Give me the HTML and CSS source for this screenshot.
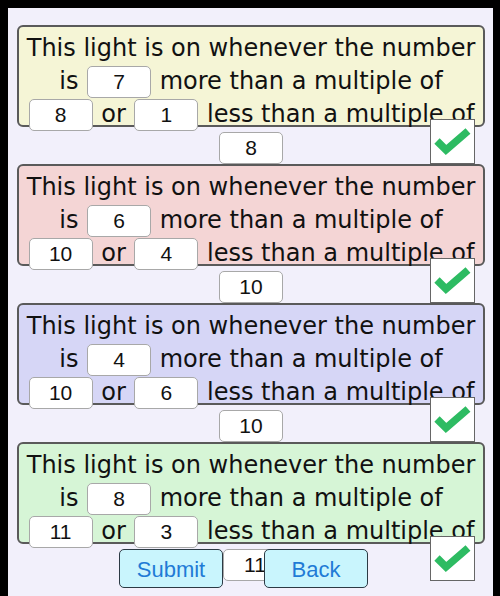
FILE: index.html
```html
<!DOCTYPE html>
<html lang="en">
<head>
  <meta charset="UTF-8" />
  <meta name="viewport" content="width=device-width, initial-scale=1" />
  <title>Lights</title>
  <link rel="stylesheet" href="styles.css">
</head>
<body>
  <div class="screen">

    <!-- Rule 1 -->
    <div class="rule">
      <div class="panel yellow">
        <div class="line">This light is on whenever the number</div>
        <div class="line">is <input class="num" type="text" value="7"> more than a multiple of</div>
        <div class="line"><input class="num" type="text" value="8"> or <input class="num" type="text" value="1"> less than a multiple of</div>
      </div>
      <div class="mod-row"><input class="num" type="text" value="8"></div>
      <div class="check"><svg width="43" height="43" viewBox="0 0 43 43"><polyline points="6,21 15,30 37,11" /></svg></div>
    </div>

    <!-- Rule 2 -->
    <div class="rule">
      <div class="panel pink">
        <div class="line">This light is on whenever the number</div>
        <div class="line">is <input class="num" type="text" value="6"> more than a multiple of</div>
        <div class="line"><input class="num" type="text" value="10"> or <input class="num" type="text" value="4"> less than a multiple of</div>
      </div>
      <div class="mod-row"><input class="num" type="text" value="10"></div>
      <div class="check"><svg width="43" height="43" viewBox="0 0 43 43"><polyline points="6,21 15,30 37,11" /></svg></div>
    </div>

    <!-- Rule 3 -->
    <div class="rule">
      <div class="panel blue">
        <div class="line">This light is on whenever the number</div>
        <div class="line">is <input class="num" type="text" value="4"> more than a multiple of</div>
        <div class="line"><input class="num" type="text" value="10"> or <input class="num" type="text" value="6"> less than a multiple of</div>
      </div>
      <div class="mod-row"><input class="num" type="text" value="10"></div>
      <div class="check"><svg width="43" height="43" viewBox="0 0 43 43"><polyline points="6,21 15,30 37,11" /></svg></div>
    </div>

    <!-- Rule 4 + buttons -->
    <div class="rule">
      <div class="panel green">
        <div class="line">This light is on whenever the number</div>
        <div class="line">is <input class="num" type="text" value="8"> more than a multiple of</div>
        <div class="line"><input class="num" type="text" value="11"> or <input class="num" type="text" value="3"> less than a multiple of</div>
      </div>
      <div class="mod-row last">
        <button class="app-btn">Submit</button>
        <input class="num" type="text" value="11">
        <button class="app-btn back">Back</button>
      </div>
      <div class="check"><svg width="43" height="43" viewBox="0 0 43 43"><polyline points="6,21 15,30 37,11" /></svg></div>
    </div>

  </div>
</body>
</html>
```

FILE: styles.css
```css
* {
  box-sizing: border-box;
  margin: 0;
  padding: 0;
}

html, body {
  height: 100%;
  font-family: 'DejaVu Sans', sans-serif;
}

body {
  background-color: #000;
  padding: 8px 7px 0 8px;
  overflow: hidden;
}

.screen {
  width: 485px;
  height: 588px;
  background-color: #f2f0fb;
  padding: 17px 8px 0 9px;
}

.rule {
  position: relative;
  height: 139px;
}

.panel {
  height: 102px;
  border: 2px solid #5a5a5a;
  border-radius: 6px;
  padding-top: 5px;
  color: #111;
  font-size: 24px;
  line-height: 33px;
  text-align: center;
  white-space: nowrap;
}

.yellow { background-color: #f5f5d6; }
.pink   { background-color: #f4d5d5; }
.blue   { background-color: #d6d6f6; }
.green  { background-color: #d6f5d6; }

.num {
  display: inline-block;
  width: 64px;
  height: 32px;
  margin: 0 1px;
  border: 1px solid #a8a8a8;
  border-radius: 5px;
  background-color: #fff;
  color: #111;
  font-family: 'Liberation Sans', Arial, sans-serif;
  font-size: 21px;
  text-align: center;
  vertical-align: middle;
  outline: none;
}

.mod-row {
  padding-top: 5px;
  display: flex;
  justify-content: center;
  align-items: flex-start;
}

.mod-row .num {
  margin: 0;
}

.app-btn {
  width: 104px;
  height: 39px;
  background-color: #c9f5fd;
  border: 1.5px solid #2c3a44;
  border-radius: 5px;
  color: #1f7bd6;
  font-family: 'Liberation Sans', Arial, sans-serif;
  font-size: 22px;
  padding-top: 3px;
  cursor: pointer;
}

.app-btn.back {
  margin-left: -23px;
  margin-right: 15px;
}

.check {
  position: absolute;
  top: 94px;
  right: 10px;
  width: 45px;
  height: 45px;
  background-color: #fff;
  border: 1px solid #666;
}

.check svg {
  display: block;
}

.check polyline {
  fill: none;
  stroke: #2dbb62;
  stroke-width: 7.5;
  stroke-linejoin: miter;
}
```
